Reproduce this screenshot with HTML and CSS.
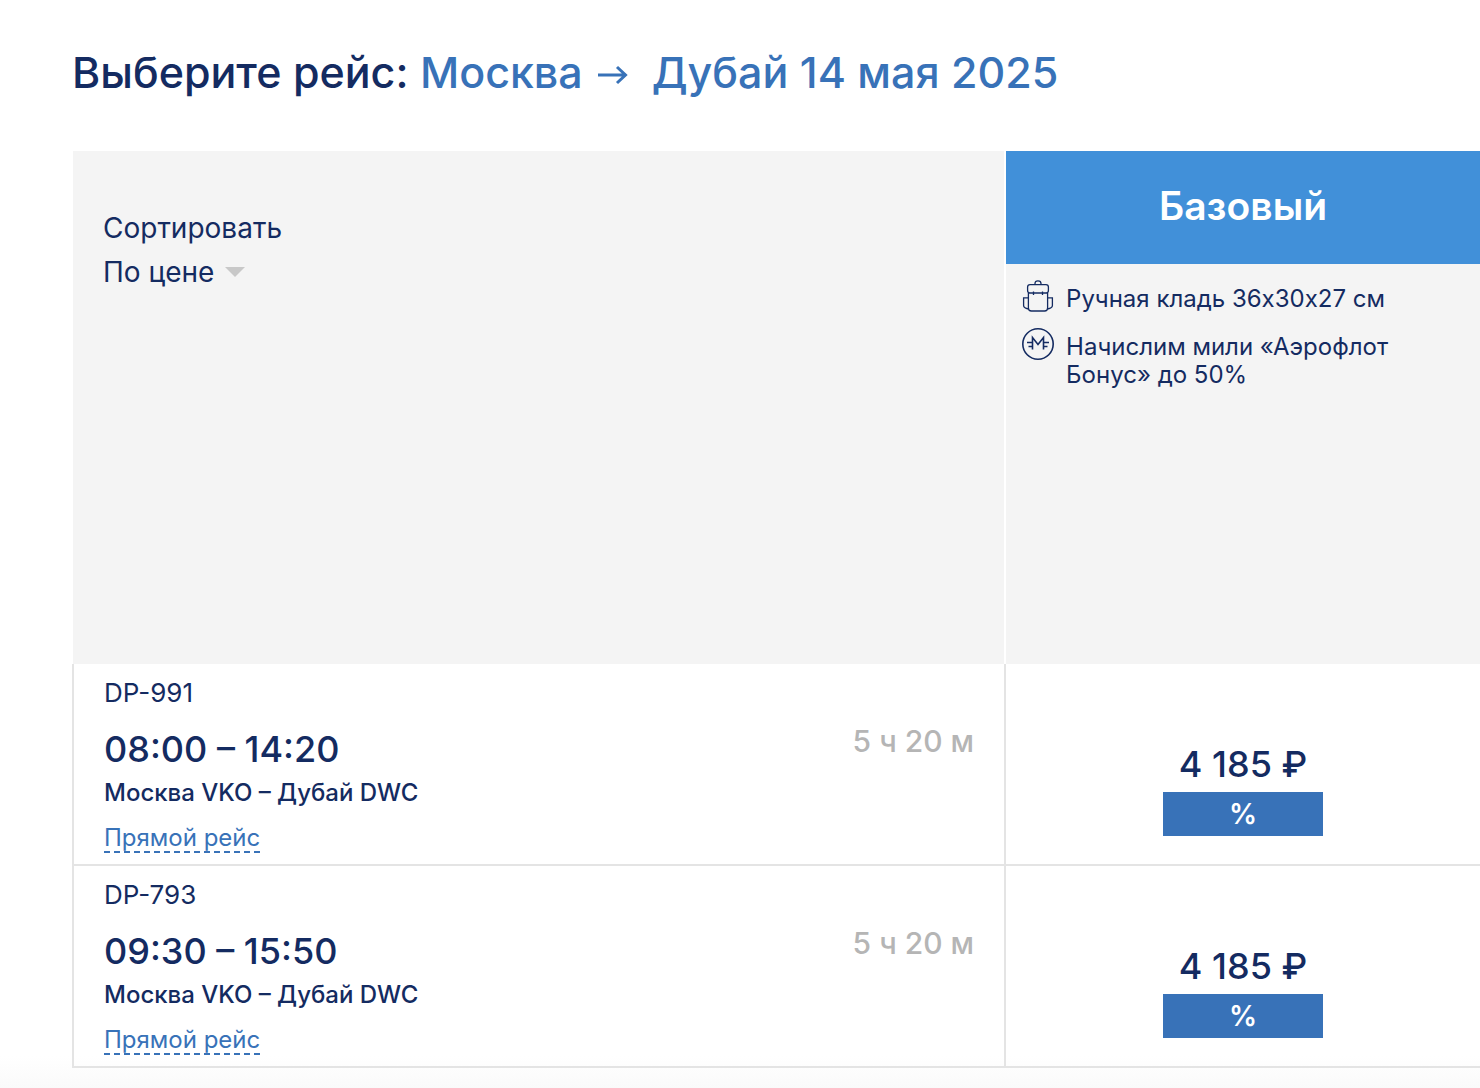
FILE: index.html
```html
<!DOCTYPE html>
<html lang="ru">
<head>
<meta charset="utf-8">
<meta name="viewport" content="width=device-width, initial-scale=1">
<title>Выберите рейс</title>
<link rel="stylesheet" href="styles.css">
</head>
<body>
<main class="page">
  <h1 class="title">Выберите рейс:
    <span class="route-title">Москва <svg class="arrow" viewBox="0 0 30 20" aria-hidden="true"><path d="M0 10H28M19 2L27.500 10L19 18" /></svg> Дубай 14 мая 2025</span>
  </h1>

  <table class="flights">
    <thead>
      <tr>
        <th class="sort-cell" scope="col">
          <label class="sort-label" for="sort">Сортировать</label>
          <span class="sort-control">
            <select class="sort-select" id="sort">
              <option>По цене</option>
            </select>
          </span>
        </th>
        <th class="fare-cell" scope="col">
          <div class="fare-name">Базовый</div>
          <ul class="features">
            <li class="feature">
              <svg class="icon" viewBox="0 0 32 32" aria-hidden="true">
                <path d="M13 4.500V3.500Q13 .8 16 .8Q19 .8 19 3.500V4.500M8 4.600H24Q26.400 4.600 26.400 7V10.500Q26.400 13 24 13H8Q5.600 13 5.600 10.500V7Q5.600 4.600 8 4.600ZM6.400 12.500V28Q6.400 31 9.400 31H22.600Q25.600 31 25.600 28V12.500M11.500 11.500V15M20.500 11.500V15M6 17.800H1.600V25.500Q1.600 28 6.400 29M26 17.800H30.400V25.500Q30.400 28 25.600 29" />
              </svg>
              <span>Ручная кладь 36х30х27 см</span>
            </li>
            <li class="feature">
              <svg class="icon icon-miles" viewBox="0 0 32 32" aria-hidden="true">
                <circle cx="16" cy="16" r="15.200" />
                <path d="M10.500 21.500V9.500L16 16.500L21.500 9.500V21.500M5 14.500H10.500M6.500 18.500H10.500M21.500 14.500H27M21.500 18.500H25.500" />
              </svg>
              <span>Начислим мили «Аэрофлот Бонус» до 50%</span>
            </li>
          </ul>
        </th>
      </tr>
    </thead>
    <tbody>
      <tr>
        <td class="flight-cell">
          <div class="flight">
            <div class="flight-info">
              <div class="flight-number">DP-991</div>
              <div class="flight-time">08:00 – 14:20</div>
              <div class="flight-route">Москва VKO – Дубай DWC</div>
              <a class="direct" href="#">Прямой рейс</a>
            </div>
            <div class="duration">5 ч 20 м</div>
          </div>
        </td>
        <td class="price-cell">
          <div class="price">4 185 ₽</div>
          <button class="discount" type="button">%</button>
        </td>
      </tr>
      <tr>
        <td class="flight-cell">
          <div class="flight">
            <div class="flight-info">
              <div class="flight-number">DP-793</div>
              <div class="flight-time">09:30 – 15:50</div>
              <div class="flight-route">Москва VKO – Дубай DWC</div>
              <a class="direct" href="#">Прямой рейс</a>
            </div>
            <div class="duration">5 ч 20 м</div>
          </div>
        </td>
        <td class="price-cell">
          <div class="price">4 185 ₽</div>
          <button class="discount" type="button">%</button>
        </td>
      </tr>
    </tbody>
  </table>
</main>
</body>
</html>
```
FILE: styles.css
```css
* {
  box-sizing: border-box;
}

body {
  margin: 0;
  background: #fff;
  color: #142b61;
  font-family: Inter, "Open Sans", sans-serif;
  font-weight: 400;
}

.page {
  padding: 44px 0 20px 72px;
  background: linear-gradient(to top, #fafafa, #fff 32px);
}

.title {
  margin: 0 0 51px;
  font-size: 43px;
  line-height: 56px;
  font-weight: 500;
}

.route-title {
  color: #3872b8;
}

.arrow {
  width: 30px;
  height: 20px;
  margin: 0 12px 3px 4px;
  fill: none;
  stroke: currentColor;
  stroke-width: 3;
}

.flights {
  width: 100%;
  border-spacing: 0;
  table-layout: fixed;
}

th,
td {
  padding: 0;
  text-align: left;
  vertical-align: top;
  font-weight: inherit;
}

.sort-cell {
  width: 66.2%;
  height: 513px;
  padding: 61px 30px 0;
  background: #f4f4f4;
  border-left: 1px solid #fff;
}

.fare-cell {
  background: #f4f4f4;
  border-left: 2px solid #fff;
}

.sort-label {
  display: block;
  margin-bottom: 12px;
  font-size: 28px;
  line-height: 32px;
}

.sort-control {
  display: inline-flex;
  align-items: center;
  gap: 10px;
}

.sort-control::after {
  content: "";
  border: 10px solid transparent;
  border-top-color: #c8c8c8;
  border-bottom: 0;
}

.sort-select {
  appearance: none;
  padding: 0;
  border: 0;
  background: none;
  color: inherit;
  font: inherit;
  font-size: 28px;
  line-height: 32px;
}

.fare-name {
  padding: 27px 0 30px;
  background: #4190d9;
  color: #fff;
  font-size: 39px;
  line-height: 56px;
  font-weight: 600;
  text-align: center;
}

.features {
  display: flex;
  flex-direction: column;
  gap: 15px;
  margin: 0;
  padding: 16px 60px 0 16px;
  list-style: none;
  font-size: 24px;
  line-height: 28px;
}

.feature {
  display: flex;
  align-items: flex-start;
  gap: 12px;
}

.feature span {
  padding-top: 5px;
}

.icon {
  flex: none;
  width: 32px;
  height: 32px;
  fill: none;
  stroke: currentColor;
  stroke-width: 1.3;
}

.icon-miles {
  stroke-width: 1.6;
}

.flight-cell {
  border-left: 2px solid #e4e4e4;
  border-bottom: 2px solid #e4e4e4;
}

.price-cell {
  padding-top: 76px;
  border-left: 2px solid #e4e4e4;
  border-bottom: 2px solid #e4e4e4;
  text-align: center;
}

.flight {
  display: flex;
  justify-content: space-between;
  padding: 13px 30px 11px;
}

.flight-number {
  margin-bottom: 16px;
  font-size: 26px;
  line-height: 32px;
}

.flight-time {
  margin-bottom: 4px;
  font-size: 36px;
  line-height: 48px;
  font-weight: 500;
}

.flight-route {
  margin-bottom: 15px;
  font-size: 24px;
  line-height: 32px;
  font-weight: 500;
}

.direct {
  display: block;
  width: fit-content;
  border-bottom: 2px dashed #3872b8;
  color: #3872b8;
  font-size: 24px;
  line-height: 27px;
  text-decoration: none;
}

.duration {
  padding-top: 44px;
  color: #b5b5b5;
  font-size: 30px;
  line-height: 40px;
  font-weight: 500;
}

.price {
  margin-bottom: 4px;
  font-size: 36px;
  line-height: 48px;
  font-weight: 500;
}

.discount {
  width: 160px;
  height: 44px;
  padding: 0;
  border: 0;
  background: #3872b8;
  color: #fff;
  font: inherit;
  font-size: 28px;
  font-weight: 600;
}
```
